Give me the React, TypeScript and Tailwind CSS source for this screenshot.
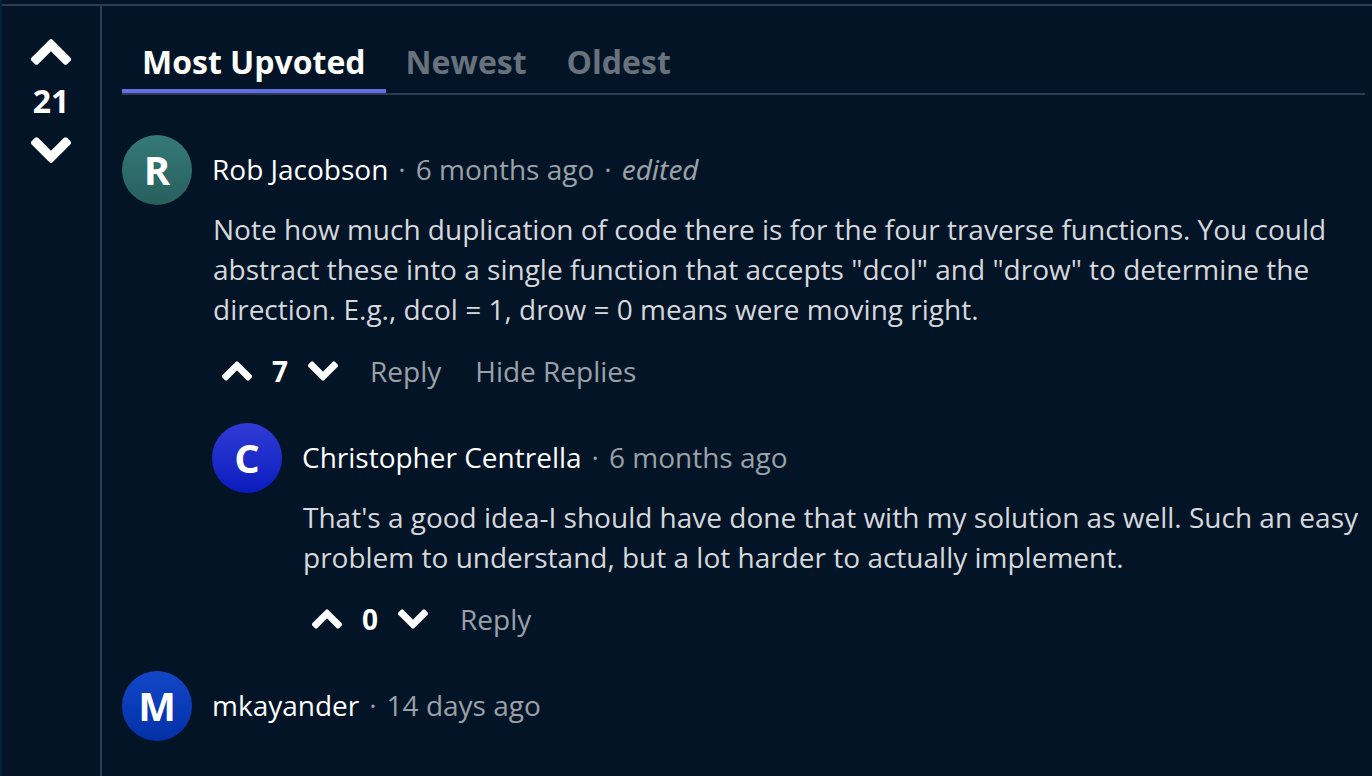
import { useState, type ReactNode } from "react";

type CommentData = {
  initial: string;
  avatar: string;
  name: string;
  time: string;
  edited?: boolean;
  body?: string;
  votes?: number;
  replies?: CommentData[];
};

const comments: CommentData[] = [
  {
    initial: "R",
    avatar: "from-[#357a78] to-[#285f5d]",
    name: "Rob Jacobson",
    time: "6 months ago",
    edited: true,
    body: 'Note how much duplication of code there is for the four traverse functions. You could abstract these into a single function that accepts "dcol" and "drow" to determine the direction. E.g., dcol = 1, drow = 0 means were moving right.',
    votes: 7,
    replies: [
      {
        initial: "C",
        avatar: "from-[#2f3bd6] to-[#0a1bbd]",
        name: "Christopher Centrella",
        time: "6 months ago",
        body: "That's a good idea-I should have done that with my solution as well. Such an easy problem to understand, but a lot harder to actually implement.",
        votes: 0,
      },
    ],
  },
  {
    initial: "M",
    avatar: "from-[#1347c8] to-[#0330a8]",
    name: "mkayander",
    time: "14 days ago",
  },
];

const tabs = ["Most Upvoted", "Newest", "Oldest"];

function Chevron({ down = false, className }: { down?: boolean; className: string }) {
  return (
    <svg
      viewBox="0 0 40 26"
      fill="currentColor"
      stroke="currentColor"
      strokeWidth="5"
      strokeLinejoin="round"
      aria-hidden="true"
      className={className}
    >
      <path
        transform={down ? "rotate(180 20 13)" : undefined}
        d="M20 2.7 L37.5 20.2 L34.5 23.2 L20 8.7 L5.5 23.2 L2.5 20.2 Z"
      />
    </svg>
  );
}

function TextButton({ children, onClick }: { children: ReactNode; onClick?: () => void }) {
  return (
    <button type="button" onClick={onClick} className="text-[#9aa1a8]">
      {children}
    </button>
  );
}

function Comment({ comment }: { comment: CommentData }) {
  const [open, setOpen] = useState(true);
  return (
    <article>
      <header className="flex items-center gap-5">
        <div
          className={`flex size-[70px] shrink-0 items-center justify-center rounded-full bg-linear-to-b text-[40px] font-bold ${comment.avatar}`}
        >
          {comment.initial}
        </div>
        <p className="pb-0.5 text-[#9aa1a8]">
          <span className="text-white">{comment.name}</span>
          <span className="px-[10px]">·</span>
          {comment.time}
          {comment.edited && (
            <>
              <span className="px-[10px]">·</span>
              <em className="font-['Noto_Sans','Open_Sans',sans-serif]">edited</em>
            </>
          )}
        </p>
      </header>
      {comment.body && (
        <div className="pl-[90px]">
          <p className="mt-1 pl-px text-[#d5d8dc]">{comment.body}</p>
          <div className="mt-[21px] mb-[31px] flex h-[42px] items-center pl-[10px]">
            <button type="button" aria-label="Upvote comment">
              <Chevron className="h-5 w-[30px]" />
            </button>
            <span className="w-14 text-center font-bold">{comment.votes}</span>
            <button type="button" aria-label="Downvote comment">
              <Chevron down className="h-5 w-[30px]" />
            </button>
            <div className="ml-8 flex gap-[34px]">
              <TextButton>Reply</TextButton>
              {comment.replies && (
                <TextButton onClick={() => setOpen(!open)}>
                  {open ? "Hide Replies" : "Show Replies"}
                </TextButton>
              )}
            </div>
          </div>
          {open && comment.replies?.map((reply) => <Comment key={reply.name} comment={reply} />)}
        </div>
      )}
    </article>
  );
}

export default function App() {
  const [active, setActive] = useState(tabs[0]);
  return (
    <div className="flex min-h-screen flex-col border-l-2 border-[#04203d] bg-[#031426] pt-1 font-['Open_Sans',sans-serif] text-[28px] leading-10 text-white">
      <div className="flex grow border-t-2 border-[#2d3b53]">
        <aside className="flex w-[100px] shrink-0 flex-col items-center border-r-2 border-[#2d3b53] pt-[33px]">
          <button type="button" aria-label="Upvote">
            <Chevron className="h-[26px] w-10" />
          </button>
          <span className="my-4 text-[32px] font-bold">21</span>
          <button type="button" aria-label="Downvote">
            <Chevron down className="h-[26px] w-10" />
          </button>
        </aside>
        <main className="min-w-0 grow pt-[34px] pl-5">
          <nav role="tablist" className="mr-[7px] flex border-b-2 border-[#2d3b53]">
            {tabs.map((tab) => (
              <button
                key={tab}
                type="button"
                role="tab"
                aria-selected={tab === active}
                onClick={() => setActive(tab)}
                className={`border-b-4 px-5 pb-[5px] text-[32px] leading-[44px] font-bold ${
                  tab === active ? "border-[#626ee3] text-white" : "border-transparent text-[#68727d]"
                }`}
              >
                {tab}
              </button>
            ))}
          </nav>
          <section className="pt-10" aria-label="Comments">
            {comments.map((comment) => (
              <Comment key={comment.name} comment={comment} />
            ))}
          </section>
        </main>
      </div>
    </div>
  );
}
